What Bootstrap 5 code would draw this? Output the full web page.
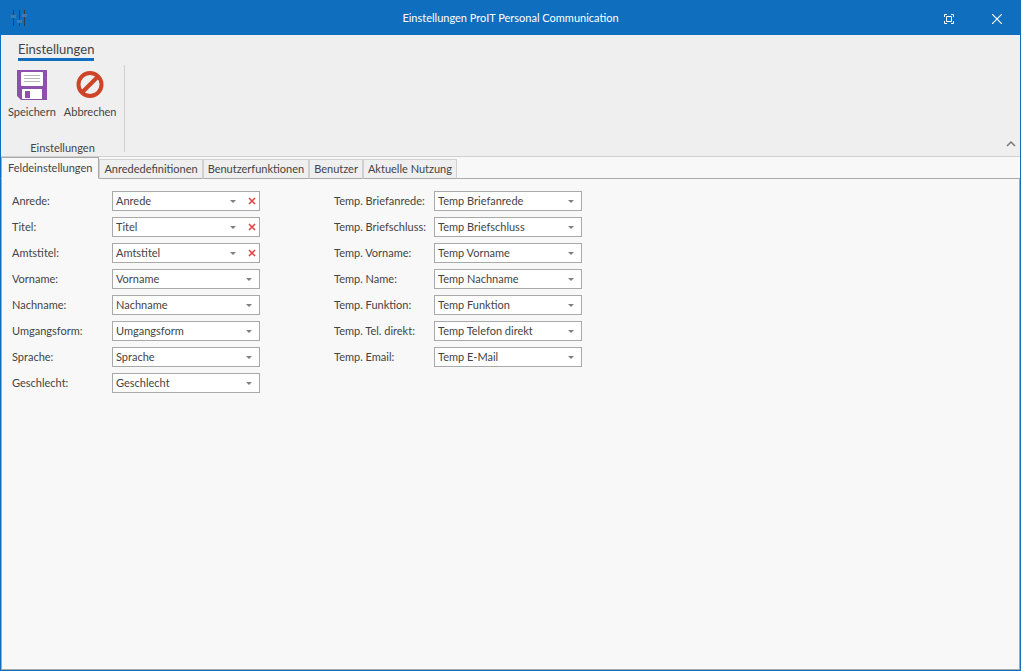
<!DOCTYPE html>
<html lang="de">
<head>
<meta charset="utf-8">
<meta name="viewport" content="width=device-width, initial-scale=1">
<title>Einstellungen ProIT Personal Communication</title>
<link href="https://cdn.jsdelivr.net/npm/bootstrap@5.3.0/dist/css/bootstrap.min.css" rel="stylesheet">
<style>
  :root { --accent: #106ebe; --ink: #444; --line: #a9a9a9; --soft: #d0d0d0; --page: #f8f8f8; --bar: #efefef; }
  body { font: 11px/16px Lato, "Noto Sans", sans-serif; color: var(--ink); background: var(--page); }
  .app-window { border: 1px solid var(--accent); border-top: 0; }
  .titlebar { height: 35px; background: var(--accent); color: #fff; display: grid; grid-template-columns: 1fr auto 1fr; }
  .titlebar h1 { font-size: 11px; line-height: 16px; font-weight: 400; }
  .titlebar .btn { width: 46px; height: 35px; color: #fff; }
  .window-buttons { gap: 2px; }
  .ribbon { background: var(--bar); border-bottom: 1px solid var(--soft); height: 122px; }
  .ribbon-tab { font-size: 13px; line-height: 18px; color: var(--ink); border-bottom: 3px solid var(--accent); margin: 5px 0 0 17px; }
  .ribbon-group { width: 124px; border-right: 1px solid var(--soft); height: 87px; margin-top: 4px; }
  .group-title { line-height: 8px; }
  .plain-btn { font-size: 11px; line-height: 16px; color: var(--ink); border: 0; border-radius: 0; padding: 0; }
  .tool-btn { padding: 5px 4px 0; }
  .tool-bar { padding: 0 3px; }
  .collapse-btn { width: 18px; height: 16px; }
  .tabs { border: 0; height: 22px; border-bottom: 1px solid var(--line); }
  .tabs .nav-link { font-size: 11px; line-height: 18px; height: 20px; padding: 0 4px; margin: 0; color: var(--ink); background: var(--bar); border: 1px solid var(--soft); border-bottom-color: var(--line); border-radius: 0; }
  .tabs .nav-link.active { height: 22px; line-height: 20px; padding: 0 6px; color: var(--ink); background: var(--page); border-color: var(--line) var(--line) var(--page); }
  .tabs .nav-item { margin-bottom: -1px; }
  .panel { border: 1px solid var(--line); border-top: 0; padding: 12px 10px; }
  .fields { column-gap: 74px; row-gap: 6px; }
  .field-row { height: 20px; margin-bottom: 6px; }
  .field-row label { width: 100px; white-space: nowrap; }
  .combo { width: 148px; height: 20px; background: #fff; border: 1px solid var(--line); }
  .combo select { min-width: 0; height: 18px; font-size: 11px; line-height: 16px; color: var(--ink); border: 0; border-radius: 0; padding: 0 20px 0 3px;
    background: #fff url("data:image/svg+xml,%3Csvg xmlns='http://www.w3.org/2000/svg' width='6' height='3'%3E%3Cpath d='M0 0h6L3 3z' fill='%23808080'/%3E%3C/svg%3E") no-repeat right 7px center / 6px 3px; }
  .combo .plain-btn { width: 16px; height: 18px; flex: none; padding-left: 1px; }
</style>
</head>
<body>
<div class="app-window min-vh-100 d-flex flex-column">
  <header class="titlebar align-items-center">
    <svg class="ms-2" width="20" height="20" viewBox="0 0 20 20" aria-hidden="true"><path d="M4.500 2v16M10.500 2v16M15.500 2v16" stroke="#353b40" fill="none"/><path d="M2 7h5v3H2zM8 12h5v3H8zM13 6h5v3h-5z" fill="#4378b6"/></svg>
    <h1 class="m-0">Einstellungen ProIT Personal Communication</h1>
    <div class="window-buttons d-flex justify-content-end">
      <button class="btn plain-btn" type="button" aria-label="Vollbild"><svg width="10" height="10" viewBox="0 0 10 10" fill="none" stroke="currentColor"><path d="M.5 3V.5H3M7 .5h2.500V3M9.500 7v2.500H7M3 9.500H.5V7M2.500 2.500h5v5h-5z"/></svg></button>
      <button class="btn plain-btn" type="button" aria-label="Schließen"><svg width="10" height="10" viewBox="0 0 10 10" fill="none" stroke="currentColor" stroke-width="1.200"><path d="M0 0l10 10M10 0L0 10"/></svg></button>
    </div>
  </header>

  <section class="ribbon">
    <div class="d-flex"><a class="ribbon-tab text-decoration-none" href="#">Einstellungen</a></div>
    <div class="d-flex justify-content-between align-items-end">
      <div class="ribbon-group d-flex flex-column justify-content-between">
        <div class="tool-bar d-flex">
          <button class="btn plain-btn tool-btn" type="button"><svg class="d-block mx-auto mb-1" width="30" height="30" viewBox="0 0 30 30"><path d="M0 0h30v30H4l-4-4z" fill="#8e50ad"/><path d="M5 2h20q1 0 1 1v12q0 1-1 1H5q-1 0-1-1V3q0-1 1-1zM5 19h20v10H5z" fill="#fff"/><path d="M7 5.500h16M7 8.500h16M7 11.500h16" stroke="#b8b8b8"/><path d="M8 21h5v7H8z" fill="#8e50ad"/></svg>Speichern</button>
          <button class="btn plain-btn tool-btn" type="button"><svg class="d-block mx-auto mb-1" width="30" height="30" viewBox="0 0 30 30" fill="none" stroke="#cd4429" stroke-width="4"><circle cx="15" cy="14.500" r="11.500"/><path d="M7 22.500l16-16"/></svg>Abbrechen</button>
        </div>
        <div class="text-center group-title">Einstellungen</div>
      </div>
      <button class="btn plain-btn collapse-btn" type="button" aria-label="Menüband reduzieren"><svg class="d-block mx-auto" width="10" height="8" viewBox="0 0 10 8" fill="none" stroke="#777" stroke-width="1.500"><path d="M1 6l4-4 4 4"/></svg></button>
    </div>
  </section>

  <ul class="nav nav-tabs tabs align-items-end flex-nowrap" role="tablist">
    <li class="nav-item"><button class="nav-link active" type="button" role="tab" data-bs-toggle="tab" data-bs-target="#felder">Feldeinstellungen</button></li>
    <li class="nav-item"><button class="nav-link" type="button" role="tab">Anrededefinitionen</button></li>
    <li class="nav-item"><button class="nav-link" type="button" role="tab">Benutzerfunktionen</button></li>
    <li class="nav-item"><button class="nav-link" type="button" role="tab">Benutzer</button></li>
    <li class="nav-item"><button class="nav-link" type="button" role="tab">Aktuelle Nutzung</button></li>
  </ul>

  <main class="panel flex-fill" id="felder">
    <form class="fields d-flex flex-wrap">
      <div>
        <div class="field-row d-flex align-items-center"><label for="anrede">Anrede:</label><div class="combo d-flex"><select class="form-select" id="anrede"><option>Anrede</option></select><button class="btn plain-btn" type="button" aria-label="Anrede leeren"><svg class="d-block mx-auto" width="8" height="8" viewBox="0 0 8 8" stroke="#e04343" stroke-width="1.600"><path d="M1 1l6 6M7 1L1 7"/></svg></button></div></div>
        <div class="field-row d-flex align-items-center"><label for="titel">Titel:</label><div class="combo d-flex"><select class="form-select" id="titel"><option>Titel</option></select><button class="btn plain-btn" type="button" aria-label="Titel leeren"><svg class="d-block mx-auto" width="8" height="8" viewBox="0 0 8 8" stroke="#e04343" stroke-width="1.600"><path d="M1 1l6 6M7 1L1 7"/></svg></button></div></div>
        <div class="field-row d-flex align-items-center"><label for="amtstitel">Amtstitel:</label><div class="combo d-flex"><select class="form-select" id="amtstitel"><option>Amtstitel</option></select><button class="btn plain-btn" type="button" aria-label="Amtstitel leeren"><svg class="d-block mx-auto" width="8" height="8" viewBox="0 0 8 8" stroke="#e04343" stroke-width="1.600"><path d="M1 1l6 6M7 1L1 7"/></svg></button></div></div>
        <div class="field-row d-flex align-items-center"><label for="vorname">Vorname:</label><div class="combo d-flex"><select class="form-select" id="vorname"><option>Vorname</option></select></div></div>
        <div class="field-row d-flex align-items-center"><label for="nachname">Nachname:</label><div class="combo d-flex"><select class="form-select" id="nachname"><option>Nachname</option></select></div></div>
        <div class="field-row d-flex align-items-center"><label for="umgang">Umgangsform:</label><div class="combo d-flex"><select class="form-select" id="umgang"><option>Umgangsform</option></select></div></div>
        <div class="field-row d-flex align-items-center"><label for="sprache">Sprache:</label><div class="combo d-flex"><select class="form-select" id="sprache"><option>Sprache</option></select></div></div>
        <div class="field-row d-flex align-items-center"><label for="geschlecht">Geschlecht:</label><div class="combo d-flex"><select class="form-select" id="geschlecht"><option>Geschlecht</option></select></div></div>
      </div>
      <div>
        <div class="field-row d-flex align-items-center"><label for="tbrief">Temp. Briefanrede:</label><div class="combo d-flex"><select class="form-select" id="tbrief"><option>Temp Briefanrede</option></select></div></div>
        <div class="field-row d-flex align-items-center"><label for="tschluss">Temp. Briefschluss:</label><div class="combo d-flex"><select class="form-select" id="tschluss"><option>Temp Briefschluss</option></select></div></div>
        <div class="field-row d-flex align-items-center"><label for="tvorname">Temp. Vorname:</label><div class="combo d-flex"><select class="form-select" id="tvorname"><option>Temp Vorname</option></select></div></div>
        <div class="field-row d-flex align-items-center"><label for="tname">Temp. Name:</label><div class="combo d-flex"><select class="form-select" id="tname"><option>Temp Nachname</option></select></div></div>
        <div class="field-row d-flex align-items-center"><label for="tfunktion">Temp. Funktion:</label><div class="combo d-flex"><select class="form-select" id="tfunktion"><option>Temp Funktion</option></select></div></div>
        <div class="field-row d-flex align-items-center"><label for="ttel">Temp. Tel. direkt:</label><div class="combo d-flex"><select class="form-select" id="ttel"><option>Temp Telefon direkt</option></select></div></div>
        <div class="field-row d-flex align-items-center"><label for="temail">Temp. Email:</label><div class="combo d-flex"><select class="form-select" id="temail"><option>Temp E-Mail</option></select></div></div>
      </div>
    </form>
  </main>
</div>
<script src="https://cdn.jsdelivr.net/npm/bootstrap@5.3.0/dist/js/bootstrap.bundle.min.js"></script>
</body>
</html>
